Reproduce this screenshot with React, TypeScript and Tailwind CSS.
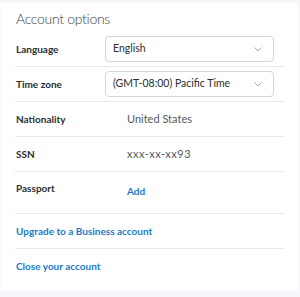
import React from "react";

function Chevron() {
  return (
    <svg width="8" height="5" viewBox="0 0 8 5" fill="none" className="text-[#a3aab2]">
      <path d="M0.5 0.5l3.5 3.5 3.5-3.5" stroke="currentColor" strokeWidth="1" />
    </svg>
  );
}

function SelectBox({ value }: { value: string }) {
  return (
    <div className="flex h-[26px] w-[169px] items-center justify-between rounded-[4px] border border-[#d3d7db] bg-white pl-[7px] pr-[11px] text-[10.5px] text-[#2c2e2f]">
      <span>{value}</span>
      <Chevron />
    </div>
  );
}

const label = "pl-[1px] text-[10px] font-bold text-[#2c2e2f]";

export default function App() {
  return (
    <div className="h-[297px] w-[300px] bg-[#f5f7fa] pt-[3px] pl-[1px] pr-[2px]" style={{ fontFamily: 'Lato, "Open Sans", sans-serif' }}>
      <div className="h-[288px] bg-white px-[14px]">
        <div className="h-[33px] pt-[6px] pl-[1px] text-[14px] leading-[20px] font-light tracking-[-0.3px] text-[#3a3d40]">Account options</div>
        <div className="flex h-[31px] items-start border-b border-[#e8eaec]">
          <div className={`flex h-[26px] w-[90px] items-center ${label}`}>Language</div>
          <SelectBox value="English" />
        </div>
        <div className="flex h-[35px] items-start border-b border-[#e8eaec] pt-[4px]">
          <div className={`flex h-[26px] w-[90px] items-center ${label}`}>Time zone</div>
          <SelectBox value="(GMT-08:00) Pacific Time" />
        </div>
        <div className="flex h-[35px] items-center border-b border-[#e8eaec]">
          <div className={`w-[112px] ${label}`}>Nationality</div>
          <div className="text-[11px] text-[#545a61]">United States</div>
        </div>
        <div className="flex h-[35px] items-center border-b border-[#e8eaec]">
          <div className={`w-[112px] ${label}`}>SSN</div>
          <div className="text-[11px] tracking-[0.5px] text-[#545a61]">xxx-xx-xx93</div>
        </div>
        <div className="flex h-[42px] items-start border-b border-[#e8eaec] pt-[9px]">
          <div className={`w-[112px] ${label}`}>Passport</div>
          <div className="pt-[3px] text-[10px] font-bold text-[#1a7bc9]">Add</div>
        </div>
        <div className="flex h-[35px] items-center border-b border-[#e8eaec] pl-[1px] text-[10px] font-bold text-[#1a7bc9]">
          Upgrade to a Business account
        </div>
        <div className="flex h-[34px] items-center pl-[1px] text-[10px] font-bold text-[#1a7bc9]">
          Close your account
        </div>
      </div>
    </div>
  );
}
